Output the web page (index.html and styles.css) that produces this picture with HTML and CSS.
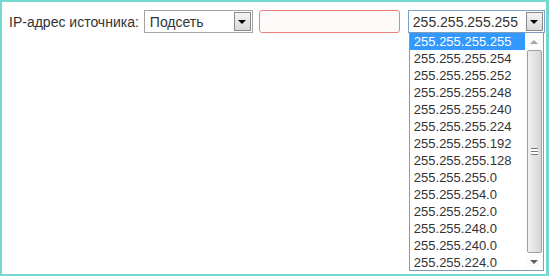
FILE: index.html
```html
<!DOCTYPE html>
<html lang="ru">
<head>
    <meta charset="UTF-8">
    <title>IP-адрес источника</title>
    <link rel="stylesheet" href="styles.css">
</head>
<body>
    <div class="frame">
        <div class="row">
            <span class="label">IP-адрес источника:</span>
            <div class="select select-type">
                <span class="select-value">Подсеть</span>
                <span class="select-btn"><i class="arrow"></i></span>
            </div>
            <div class="input input-error"></div>
            <div class="select select-mask focused">
                <span class="select-value">255.255.255.255</span>
                <span class="select-btn"><i class="arrow"></i></span>
                <div class="dropdown">
                    <ul class="options">
                        <li class="selected">255.255.255.255</li>
                        <li>255.255.255.254</li>
                        <li>255.255.255.252</li>
                        <li>255.255.255.248</li>
                        <li>255.255.255.240</li>
                        <li>255.255.255.224</li>
                        <li>255.255.255.192</li>
                        <li>255.255.255.128</li>
                        <li>255.255.255.0</li>
                        <li>255.255.254.0</li>
                        <li>255.255.252.0</li>
                        <li>255.255.248.0</li>
                        <li>255.255.240.0</li>
                        <li>255.255.224.0</li>
                    </ul>
                    <div class="scrollbar">
                        <div class="sb-btn"><i class="sb-up"></i></div>
                        <div class="sb-track">
                            <div class="sb-thumb"><i class="grip"></i></div>
                        </div>
                        <div class="sb-btn"><i class="sb-down"></i></div>
                    </div>
                </div>
            </div>
        </div>
    </div>
</body>
</html>
```
FILE: styles.css
```css
body {
    margin: 0;
    font-family: "Liberation Sans", Arial, sans-serif;
    font-size: 14px;
    color: #333333;
    background: #ffffff;
}
.frame {
    width: 549px;
    height: 276px;
    box-sizing: border-box;
    border: 2px solid #74d8d1;
    border-right-width: 3px;
}
.row {
    display: flex;
    align-items: center;
    padding: 8px 0 0 7px;
}
.label {
    margin-right: 5px;
}
.select {
    position: relative;
    display: flex;
    align-items: center;
    height: 23px;
    box-sizing: border-box;
    border: 1px solid #a5a5a5;
    background: #ffffff;
}
.select-value {
    flex: 1;
    padding-left: 5px;
    white-space: nowrap;
    overflow: hidden;
}
.select-btn {
    display: flex;
    align-items: center;
    justify-content: center;
    flex-shrink: 0;
    width: 17px;
    height: 19px;
    margin-right: 1px;
    box-sizing: border-box;
    border: 1px solid #8a8a8a;
    background: linear-gradient(#f4f4f4, #d8d8d8);
}
.arrow {
    width: 0;
    height: 0;
    border-left: 4px solid transparent;
    border-right: 4px solid transparent;
    border-top: 4px solid #000000;
}
.select-type {
    width: 109px;
    margin-right: 6px;
}
.input {
    width: 141px;
    height: 23px;
    box-sizing: border-box;
    border-radius: 3px;
}
.input-error {
    border: 1px solid #ee7f7f;
    background: #fffafa;
    margin-right: 8px;
}
.select-mask {
    width: 137px;
}
.select-mask .select-value {
    padding-left: 4px;
    text-overflow: clip;
}
.focused {
    border-color: #7da2ce;
}
.dropdown {
    position: absolute;
    left: 0;
    top: 21px;
    width: 135px;
    height: 239px;
    box-sizing: border-box;
    border: 1px solid #7f9db9;
    background: #ffffff;
    display: flex;
    font-size: 13px;
}
.options {
    list-style: none;
    margin: 0;
    padding: 0;
    flex: 1;
}
.options li {
    height: 17px;
    line-height: 17px;
    padding-left: 4px;
    margin-right: 1px;
}
.options li.selected {
    background: #3399ff;
    color: #ffffff;
}
.scrollbar {
    width: 17px;
    display: flex;
    flex-direction: column;
    background: #fcfcfc;
}
.sb-btn {
    height: 17px;
    display: flex;
    align-items: center;
    justify-content: center;
}
.sb-up {
    border-left: 4px solid transparent;
    border-right: 4px solid transparent;
    border-bottom: 4px solid #a6a6a6;
}
.sb-down {
    border-left: 4px solid transparent;
    border-right: 4px solid transparent;
    border-top: 4px solid #606060;
}
.sb-track {
    flex: 1;
    padding: 0 1px;
    display: flex;
}
.sb-thumb {
    flex: 1;
    border: 1px solid #a0a0a0;
    border-radius: 2px;
    background: linear-gradient(to right, #f0f0f0, #d6d6d6);
    display: flex;
    align-items: center;
    justify-content: center;
}
.grip {
    width: 7px;
    height: 5px;
    border-top: 1px solid #777777;
    border-bottom: 1px solid #777777;
    background: linear-gradient(#ffffff 0 2px, #777777 2px 3px, #ffffff 3px);
}
```
